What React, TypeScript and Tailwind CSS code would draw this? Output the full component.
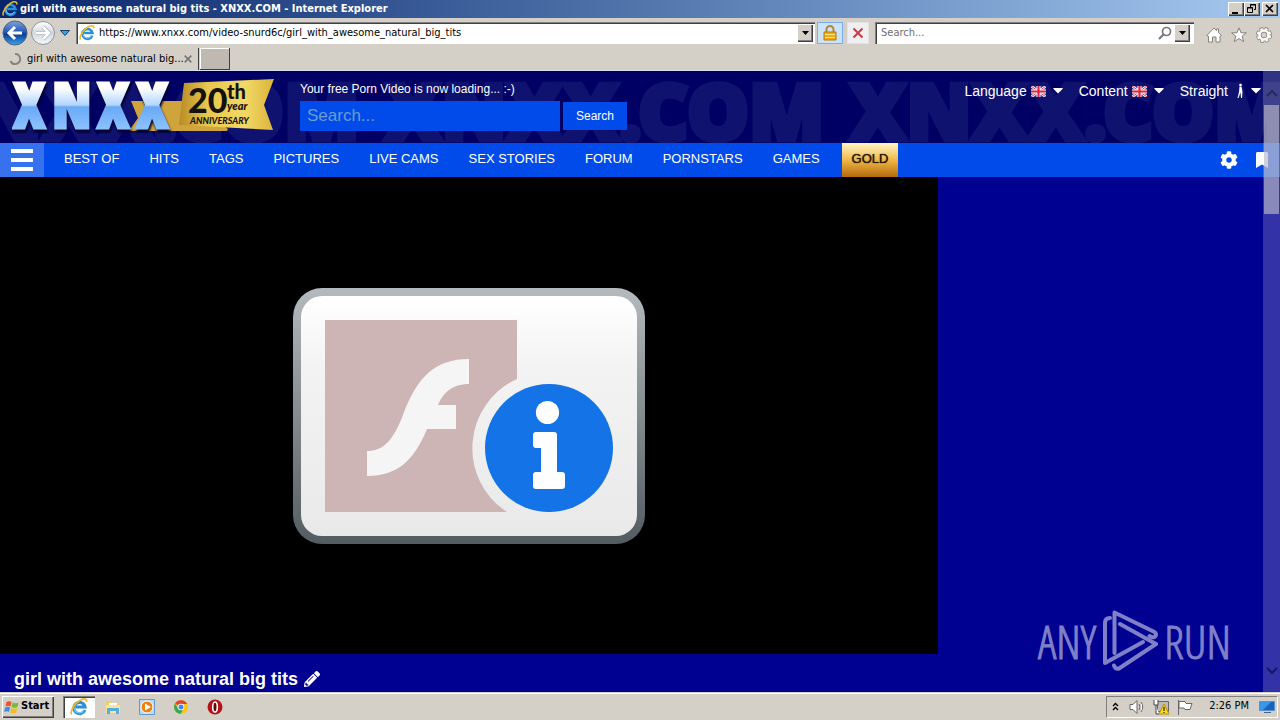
import React from "react";
import { FaCog, FaBookmark, FaPencilAlt } from "react-icons/fa";

const raised =
  "bg-[#d4d0c8] shadow-[inset_1px_1px_0_#ffffff,inset_-1px_-1px_0_#404040,inset_-2px_-2px_0_#808080]";
const sunken =
  "bg-white shadow-[inset_1px_1px_0_#808080,inset_2px_2px_0_#404040,inset_-1px_-1px_0_#ffffff]";

function IeIcon({ className }: { className: string }) {
  return (
    <svg viewBox="0 0 16 16" className={className} aria-hidden="true">
      <path d="M13.2 10.6A5 5 0 1 1 13.4 8H5.2" fill="none" stroke="#2c8fdc" strokeWidth="2.7" />
      <path d="M12.3 10.8A4.4 4.4 0 0 1 4 9" fill="none" stroke="#7cc9f5" strokeWidth="1" />
      <path d="M1.6 14.6C-.4 12.4 4 4.600 9 2c4-2.200 6.500-1.200 5.600 1.600" fill="none" stroke="#efb91c" strokeWidth="1.5" />
    </svg>
  );
}

function Triangle() {
  return (
    <svg viewBox="0 0 7 4" className="h-1 w-[7px]" aria-hidden="true">
      <path d="M0 0h7L3.500 4z" fill="#000" />
    </svg>
  );
}

function TitleBar() {
  return (
    <header className="flex h-[18px] items-center bg-linear-to-r from-[#0a246a] to-[#a6caf0] pl-0.5 pr-0.5">
      <IeIcon className="size-4 shrink-0" />
      <h1 className="min-w-0 flex-1 truncate pl-0.5 text-[11px] font-bold text-white">
        girl with awesome natural big tits - XNXX.COM - Internet Explorer
      </h1>
      <div className="flex">
        <button aria-label="Minimize" className={`flex h-3.5 w-4 items-center justify-center ${raised}`}>
          <svg viewBox="0 0 16 14" className="h-3.5 w-4"><path d="M4 10h6v2H4z" /></svg>
        </button>
        <button aria-label="Restore" className={`flex h-3.5 w-4 items-center justify-center ${raised}`}>
          <svg viewBox="0 0 16 14" className="h-3.5 w-4" fill="none" stroke="#000">
            <path d="M6.500 5V2.500h5v5H10M3.500 5.500h5v5h-5zM6 3h6M3 6h6" />
          </svg>
        </button>
        <button aria-label="Close" className={`ml-0.5 flex h-3.5 w-4 items-center justify-center ${raised}`}>
          <svg viewBox="0 0 16 14" className="h-3.5 w-4"><path d="M4 3l7 7M11 3l-7 7" stroke="#000" strokeWidth="1.700" /></svg>
        </button>
      </div>
    </header>
  );
}

function AddressBar() {
  return (
    <div className="flex h-[30px] items-center pr-2">
      <button aria-label="Back" className="ml-0.5 shrink-0">
        <svg viewBox="0 0 26 26" className="size-[26px]">
          <defs>
            <linearGradient id="back" x2="0" y2="1">
              <stop offset="0" stopColor="#7fa3dc" /><stop offset=".45" stopColor="#245bb5" />
              <stop offset=".55" stopColor="#0b3c96" /><stop offset="1" stopColor="#37a7ee" />
            </linearGradient>
          </defs>
          <circle cx="13" cy="13" r="12" fill="url(#back)" stroke="#52607c" />
          <path d="M20 13H8M13 7l-6 6 6 6" fill="none" stroke="#fff" strokeWidth="3" />
        </svg>
      </button>
      <button aria-label="Forward" className="ml-0.5 shrink-0">
        <svg viewBox="0 0 26 26" className="size-[26px]">
          <defs>
            <linearGradient id="forward" x2="0" y2="1">
              <stop offset="0" stopColor="#fff" /><stop offset=".5" stopColor="#d3d8df" /><stop offset="1" stopColor="#f5f8fb" />
            </linearGradient>
          </defs>
          <circle cx="13" cy="13" r="11.500" fill="url(#forward)" stroke="#8d949d" />
          <path d="M6 13h12M13 7l6 6-6 6" fill="none" stroke="#aab0b8" strokeWidth="4" />
          <path d="M6 13h12M13 7l6 6-6 6" fill="none" stroke="#fff" strokeWidth="2.500" />
        </svg>
      </button>
      <button aria-label="Recent pages" className="ml-1 shrink-0">
        <svg viewBox="0 0 10 6" className="h-1.5 w-2.5"><path d="M.5.5h9L5 5.500z" fill="#35a4e8" stroke="#103c70" /></svg>
      </button>
      <div className={`ml-1.5 flex h-[22px] min-w-0 flex-1 items-center pl-[3px] pr-0.5 ${sunken}`}>
        <IeIcon className="size-4 shrink-0" />
        <input
          aria-label="Address"
          className="ml-1 min-w-0 flex-1 bg-transparent text-[11px] text-black outline-none"
          defaultValue="https://www.xnxx.com/video-snurd6c/girl_with_awesome_natural_big_tits"
        />
        <button aria-label="Show addresses" className={`flex h-[18px] w-4 items-center justify-center ${raised}`}><Triangle /></button>
      </div>
      <button aria-label="Security report" className="ml-0.5 flex h-[22px] w-[26px] items-center justify-center border border-[#77aef0] bg-[#cbe2fb]">
        <svg viewBox="0 0 14 16" className="h-4 w-3.5">
          <path d="M3.500 8V4.500a3.500 3.500 0 0 1 7 0V8" fill="none" stroke="#b18a2c" strokeWidth="2" />
          <path d="M1 7h12v8H1z" fill="#efae16" stroke="#b77908" /><path d="M2 9.500h10M2 12.500h10" stroke="#fae07b" />
        </svg>
      </button>
      <button aria-label="Stop" className="ml-1 flex h-[22px] w-[22px] items-center justify-center border border-[#e5e3df] bg-[#efeff2]">
        <svg viewBox="0 0 12 12" className="size-3"><path d="M1.500 1.500l9 9M10.500 1.500l-9 9" stroke="#c63d46" strokeWidth="2" /></svg>
      </button>
      <div className={`ml-1.5 flex h-[22px] w-[319px] items-center pl-1.5 pr-1 ${sunken}`}>
        <input
          aria-label="Search the web"
          placeholder="Search..."
          className="min-w-0 flex-1 bg-transparent text-[11px] outline-none placeholder:text-[#6d6d6d]"
        />
        <svg viewBox="0 0 14 14" className="mr-0.5 size-3.5" aria-hidden="true">
          <circle cx="8.500" cy="5.500" r="4" fill="none" stroke="#777" strokeWidth="1.700" /><path d="M5.500 8.500L1 13" stroke="#777" strokeWidth="2.200" />
        </svg>
        <button aria-label="Search providers" className={`flex h-[18px] w-4 items-center justify-center ${raised}`}><Triangle /></button>
      </div>
      <div className="ml-3 flex items-center gap-[9px] pt-1">
        <button aria-label="Home">
          <svg viewBox="0 0 16 16" className="size-4" fill="#fff" stroke="#85817b"><path d="M.8 8.500L8 1l2.500 2.500V2h2v3.500l2.800 3-1.300.800V15h-4v-5H6.500v5h-4V9.300z" /></svg>
        </button>
        <button aria-label="Favorites">
          <svg viewBox="0 0 16 16" className="size-4" fill="#fff" stroke="#85817b"><path d="M8 .8l2 5h5.300l-4.200 3.400 1.600 5.500L8 11.500l-4.700 3.200 1.600-5.500L.7 5.800H6z" /></svg>
        </button>
        <button aria-label="Tools">
          <svg viewBox="0 0 16 16" className="size-4" fill="none">
            <circle cx="8" cy="8" r="6" stroke="#85817b" strokeWidth="4" strokeDasharray="3.200 1.510" />
            <circle cx="8" cy="8" r="4.500" stroke="#85817b" strokeWidth="4" /><circle cx="8" cy="8" r="4.500" stroke="#fff" strokeWidth="2.600" />
            <circle cx="8" cy="8" r="6.100" stroke="#fff" strokeWidth="2.200" strokeDasharray="2.400 2.390" strokeDashoffset="-.4" />
          </svg>
        </button>
      </div>
    </div>
  );
}

function TabStrip() {
  return (
    <div className="flex h-[23px] items-stretch border-b border-[#d5e0f5]">
      <div className="flex w-[199px] items-center border-r border-[#404040] pl-2 pr-1.5">
        <svg viewBox="0 0 14 14" className="size-3.5 shrink-0" aria-hidden="true">
          <path d="M7 2a5 5 0 1 1-4.500 7" fill="none" stroke="#858585" strokeWidth="2" />
        </svg>
        <span className="ml-[5px] flex-1 whitespace-nowrap text-[11px] text-black">girl with awesome natural big...</span>
        <button aria-label="Close tab">
          <svg viewBox="0 0 8 8" className="size-2"><path d="M.7.7l6.600 6.600M7.300.7L.7 7.300" stroke="#777" strokeWidth="1.700" /></svg>
        </button>
      </div>
      <button aria-label="New tab" className="ml-px w-[30px] border-b border-r border-[#404040] bg-[#bfb9b1] shadow-[inset_1px_1px_0_#ffffff]" />
    </div>
  );
}

function Flag() {
  return (
    <svg viewBox="0 0 15 11" className="h-[11px] w-[15px]" aria-hidden="true">
      <path d="M0 0h15v11H0z" fill="#263d8f" />
      <path d="M0 0l15 11M15 0L0 11" stroke="#fff" strokeWidth="2.600" /><path d="M0 0l15 11M15 0L0 11" stroke="#e0304a" strokeWidth="1" />
      <path d="M7.500 0v11M0 5.500h15" stroke="#fff" strokeWidth="4" /><path d="M7.500 0v11M0 5.500h15" stroke="#e41e3c" strokeWidth="2.200" />
    </svg>
  );
}

function Caret() {
  return (
    <svg viewBox="0 0 10 6" className="ml-[7px] h-1.5 w-2.5" aria-hidden="true">
      <path d="M.5 0h9q.5.3 0 .9L5.500 5q-.5.4-1 0L.5.900Q0 .3.5 0z" fill="#fff" />
    </svg>
  );
}

function Logo() {
  return (
    <a href="#home" aria-label="XNXX 20th year anniversary" className="ml-3 block h-14 w-[263px] shrink-0">
      <svg viewBox="0 0 263 56" className="h-14 w-[263px]">
        <defs>
          <linearGradient id="ribbon"><stop offset="0" stopColor="#b88b24" /><stop offset=".3" stopColor="#e8c84f" /><stop offset=".7" stopColor="#f1d965" /><stop offset="1" stopColor="#dbb33b" /></linearGradient>
          <linearGradient id="letters" gradientUnits="userSpaceOnUse" x1="0" x2="0" y1="5" y2="51"><stop offset=".1" stopColor="#fff" /><stop offset=".48" stopColor="#b2d5ff" /><stop offset=".52" stopColor="#69a9f5" /><stop offset="1" stopColor="#8cc1ff" /></linearGradient>
        </defs>
        <path d="M119 23h58l39 28-1 2H117l9-13z" fill="#cfa43c" />
        <path d="M172 5l90-4-10 26 9 25-94-5z" fill="url(#ribbon)" />
        <text y="49" fill="url(#letters)" stroke="url(#letters)" strokeWidth="5" className="font-['Noto_Sans_ExtraCondensed','Open_Sans_Condensed','Noto_Sans',sans-serif] text-[60px] font-black [filter:drop-shadow(1px_3px_1px_#00002b)]">
          <tspan x="3">X</tspan><tspan x="41">N</tspan><tspan x="87">X</tspan><tspan x="126">X</tspan>
        </text>
        <g fill="#15120d" className="font-[Lato] font-black">
          <text x="176" y="35" fontSize="34">20</text>
          <text x="215" y="21" fontSize="20">th</text>
          <text x="215" y="32" fontSize="11" fontStyle="italic">year</text>
          <text x="178" y="46" fontSize="9" fontStyle="italic">ANNIVERSARY</text>
        </g>
      </svg>
    </a>
  );
}

const links = ["BEST OF", "HITS", "TAGS", "PICTURES", "LIVE CAMS", "SEX STORIES", "FORUM", "PORNSTARS", "GAMES"];

function SiteHeader() {
  return (
    <div className="relative h-[72px] overflow-hidden border-t border-[#000030] bg-[#000064]">
      <div aria-hidden="true" className="absolute -left-20 top-0 flex font-['Noto_Sans_Condensed','Noto_Sans',sans-serif] text-[78px] font-black leading-[76px] text-[#10126f] [-webkit-text-stroke:5px_#10126f]">
        {[0, 1, 2].map((i) => (<span key={i} className="w-[465px] shrink-0 whitespace-nowrap">XNXX.COM</span>))}
      </div>
      <div className="relative flex items-start pt-[6px]">
        <Logo />
        <div className="ml-[25px] pt-[3px]">
          <p className="text-[12px] leading-4 text-white">Your free Porn Video is now loading... :-)</p>
          <form className="mt-1 flex items-center gap-[3px]" onSubmit={(e) => e.preventDefault()}>
            <input aria-label="Search videos" placeholder="Search..." className="h-[30px] w-[260px] bg-[#004bea] px-[7px] text-[17px] text-white outline-none placeholder:text-[#6d9bce]" />
            <button className="h-7 w-16 bg-[#004bea] text-[12px] text-white">Search</button>
          </form>
        </div>
        <div className="ml-auto flex gap-4 pr-[19px] pt-[5px] text-[14px] leading-4 text-white">
          <button className="flex items-center whitespace-nowrap">Language<span className="ml-1"><Flag /></span><Caret /></button>
          <button className="flex items-center whitespace-nowrap">Content<span className="ml-1"><Flag /></span><Caret /></button>
          <button className="flex items-center whitespace-nowrap">
            Straight
            <svg viewBox="0 0 8 16" className="ml-2 h-4 w-2" fill="#fff" aria-hidden="true"><circle cx="4.500" cy="2" r="1.300" /><path d="M3.500 3.500h2l1 5.500L6 15H5L4.500 9.500 2.500 15h-1L3 9z" /></svg>
            <Caret />
          </button>
        </div>
      </div>
    </div>
  );
}

function SiteNav() {
  return (
    <nav className="flex h-[34px] items-stretch bg-[#004bea] text-[13px] text-white">
      <button aria-label="Menu" className="flex w-11 flex-col items-center justify-center gap-[5px] bg-[#3671ee]">
        <span className="h-[4px] w-[22px] bg-white" /><span className="h-[4px] w-[22px] bg-white" /><span className="h-[4px] w-[22px] bg-white" />
      </button>
      <ul className="flex gap-[30px] whitespace-nowrap pb-[3px] pl-5">
        {links.map((l) => (<li key={l} className="flex items-center"><a href="#browse">{l}</a></li>))}
      </ul>
      <a href="#gold" className="ml-[22px] flex items-center bg-linear-to-b from-[#fff7c4] via-[#f0b843] to-[#b36a08] px-2.5 pb-[3px] text-[#231500] [text-shadow:0_0_1px_#231500]">GOLD</a>
      <div className="ml-auto flex items-center gap-[17px] pr-[11px]">
        <button aria-label="Settings"><FaCog className="size-[18px]" /></button>
        <button aria-label="Saved videos"><FaBookmark className="h-4 w-3.5" /></button>
      </div>
    </nav>
  );
}

function FlashNotice() {
  return (
    <svg viewBox="0 0 352 256" className="h-64 w-[352px]" role="img" aria-label="Flash plug-in information">
      <defs>
        <linearGradient id="frame" x2="0" y2="1"><stop offset="0" stopColor="#b4babd" /><stop offset="1" stopColor="#535c61" /></linearGradient>
        <linearGradient id="panel" x2="0" y2="1"><stop offset="0" stopColor="#fff" /><stop offset=".3" stopColor="#f3f3f3" /><stop offset="1" stopColor="#e9e9e9" /></linearGradient>
      </defs>
      <rect width="352" height="256" rx="29" fill="url(#frame)" />
      <rect x="8" y="8" width="336" height="240" rx="21" fill="url(#panel)" />
      <path d="M32 32h192v59a76 76 0 0 0-10 133H32z" fill="#cdb5b5" />
      <path d="M176 71v25c-17 0-26 9-31 21h18v24h-29c-13 31-29 47-60 47v-25c16 0 26-10 36-36 14-38 32-56 66-56z" fill="#f5f5f5" />
      <circle cx="256" cy="160" r="64" fill="#1473e6" />
      <circle cx="254.500" cy="124.500" r="11.600" fill="#fff" />
      <path d="M243 144h18a3 3 0 0 1 3 3v37h5a3 3 0 0 1 3 3v11a3 3 0 0 1-3 3h-26a3 3 0 0 1-3-3v-11a3 3 0 0 1 3-3h5v-24h-5a3 3 0 0 1-3-3v-10a3 3 0 0 1 3-3z" fill="#fff" />
    </svg>
  );
}

function Watermark() {
  return (
    <div className="absolute bottom-5 right-[49px] flex items-center gap-1.5 font-['Open_Sans_Condensed_Light','Noto_Sans_ExtraCondensed_Light','Noto_Sans_ExtraCondensed','Open_Sans_Condensed','Liberation_Sans_Narrow',sans-serif] text-[46px] font-light leading-none text-[#8080c8] [-webkit-text-stroke:1px_#8080c8]">
      <span>ANY</span>
      <svg viewBox="0 0 56 62" className="h-[62px] w-14" fill="none" stroke="currentColor" strokeWidth="4" strokeLinejoin="round" strokeLinecap="round" aria-hidden="true">
        <path d="M12.500 43V2.500L52.500 22q3 3 0 5-2 1-5-1" />
        <path d="M18 14L54 34 17 58.500q-4 1-5-3" />
        <path d="M8 8Q3 8 3 13v40l38-21" />
      </svg>
      <span>RUN</span>
    </div>
  );
}

function ScrollBar() {
  return (
    <div aria-hidden="true" className="absolute inset-y-0 right-0 flex w-[17px] flex-col items-center bg-white/20">
      <svg viewBox="0 0 12 8" className="mb-2 mt-[18px] h-2 w-3"><path d="M1 7l5-5 5 5" fill="none" stroke="#29295f" strokeWidth="2" /></svg>
      <div className="h-[109px] w-[15px] bg-[#b8b8c8]/65" />
      <svg viewBox="0 0 12 8" className="mb-[17px] mt-auto h-2 w-3"><path d="M1 1l5 5 5-5" fill="none" stroke="#15156c" strokeWidth="2" /></svg>
    </div>
  );
}

function TaskBar() {
  return (
    <footer className="flex h-7 items-center border-t border-[#d4d0c8] bg-[#d4d0c8] px-0.5 text-[11px] text-black shadow-[inset_0_1px_0_#ffffff]">
      <button className={`flex h-[22px] w-[52px] items-center gap-px pl-0.5 font-bold ${raised}`}>
        <svg viewBox="0 0 16 16" className="size-4 shrink-0" aria-hidden="true">
          <path d="M2.500 3c2-1 3.500-1 5 0l-1 4.500c-1.500-1-3-1-5 0z" fill="#e8552c" /><path d="M8.500 3.500c2 1 4 1 6 0l-1 4.500c-2 1-4 1-6 0z" fill="#79b840" />
          <path d="M1.200 8.500c2-1 3.500-1 5 0L5 13c-1.500-1-3-1-5 0z" fill="#3b8fdc" /><path d="M7.300 9c2 1 4 1 6 0l-1 4.500c-2 1-4 1-6 0z" fill="#f5bc1c" />
        </svg>
        Start
      </button>
      <button aria-label="Internet Explorer" className={`ml-[9px] flex h-[22px] w-8 items-center justify-center ${sunken}`}><IeIcon className="size-[18px]" /></button>
      <div className="ml-2.5 flex items-center gap-[18px]">
        <button aria-label="File Explorer">
          <svg viewBox="0 0 16 16" className="size-4"><path d="M1 2h5l1 2h7v10H1z" fill="#efcf64" /><path d="M4 4h8v4H4z" fill="#fff" /><path d="M1 6h14v8H1z" fill="#f8e59b" /><path d="M2 15V9h12v6h-3v-3H5v3z" fill="#55afdc" /></svg>
        </button>
        <button aria-label="Media Player">
          <svg viewBox="0 0 16 16" className="size-4"><path d="M.5.5h15v15H.5z" fill="#b9d9f4" stroke="#5d9acd" /><circle cx="8" cy="8" r="6" fill="#f08010" stroke="#fff" /><path d="M6 4.500v7L12 8z" fill="#fff" /></svg>
        </button>
        <button aria-label="Chrome">
          <svg viewBox="0 0 16 16" className="size-4"><circle cx="8" cy="8" r="7" fill="#fbc516" /><path d="M8 8L2 4.500A7 7 0 0 1 14.200 5H8z" fill="#df4436" /><path d="M2 4.500A7 7 0 0 0 7.500 15L10.500 9.500 5 9.500z" fill="#35a853" /><circle cx="8" cy="8" r="3.300" fill="#fff" /><circle cx="8" cy="8" r="2.500" fill="#4285f4" /></svg>
        </button>
        <button aria-label="Opera">
          <svg viewBox="0 0 16 16" className="size-4"><circle cx="8" cy="8" r="7.500" fill="#b51218" /><ellipse cx="8" cy="8" rx="2.300" ry="5" fill="#6b0508" stroke="#fff" strokeWidth="1.600" /></svg>
        </button>
      </div>
      <div className="ml-auto flex h-[22px] items-center border border-b-white border-l-[#808080] border-r-white border-t-[#808080] pl-[5px] pr-0.5">
        <button aria-label="Show hidden icons"><svg viewBox="0 0 7 9" className="h-[9px] w-[7px]" fill="none" stroke="#000" strokeWidth="1.300"><path d="M1 4l2.500-2.500L6 4M1 8l2.500-2.500L6 8" /></svg></button>
        <svg viewBox="0 0 16 16" className="ml-2.5 size-4" fill="#fff" stroke="#666" role="img" aria-label="Volume"><path d="M1 5.500h3l4-4v13l-4-4H1zM10 5q2 3 0 6M12 3q3.500 5 0 10" /></svg>
        <svg viewBox="0 0 16 16" className="ml-2 size-4" role="img" aria-label="Network"><path d="M4.500 2.500h11v10h-11z" fill="#bbb" stroke="#666" /><path d="M1 1v5h4V1M3 6v9h3" fill="#fff" stroke="#444" /><path d="M11 5l5 10H6z" fill="#ffdd1b" stroke="#b78d00" /><path d="M10.500 8h1v4h-1zM10.500 13h1v1h-1z" /></svg>
        <svg viewBox="0 0 16 16" className="ml-2 size-4" fill="#fff" stroke="#666" role="img" aria-label="Action Center"><path d="M1.500 1v15M2 2.500h6l1 2h6l-2 6H8l-1-1.500H2z" /></svg>
        <time className="ml-4 whitespace-nowrap">2:26 PM</time>
        <svg viewBox="0 0 16 14" className="ml-2.5 h-3.5 w-4" role="img" aria-label="Show desktop"><path d="M.5 1.500h15v9H.5z" fill="#1764bd" stroke="#5a90cc" /><path d="M1 2h11L4 10H1z" fill="#3b96e7" /><path d="M5 12h7v1H5z" fill="#49628d" /></svg>
      </div>
    </footer>
  );
}

export default function App() {
  return (
    <div className="flex min-h-screen flex-col bg-[#d4d0c8] font-['DejaVu_Sans_Condensed','DejaVu_Sans',sans-serif]">
      <TitleBar />
      <AddressBar />
      <TabStrip />
      <main className="relative flex flex-1 flex-col overflow-hidden bg-[#000091] font-['Liberation_Sans',Arial,sans-serif]">
        <SiteHeader />
        <SiteNav />
        <div className="flex min-h-[320px] w-[73.3%] flex-1 items-center justify-center border-t border-[#000030] bg-black">
          <FlashNotice />
        </div>
        <h2 className="flex h-[38px] items-center gap-1.5 pl-3.5 pt-3 text-[18px] font-bold text-white">
          girl with awesome natural big tits
          <FaPencilAlt className="size-4" />
        </h2>
        <Watermark />
        <ScrollBar />
      </main>
      <TaskBar />
    </div>
  );
}
